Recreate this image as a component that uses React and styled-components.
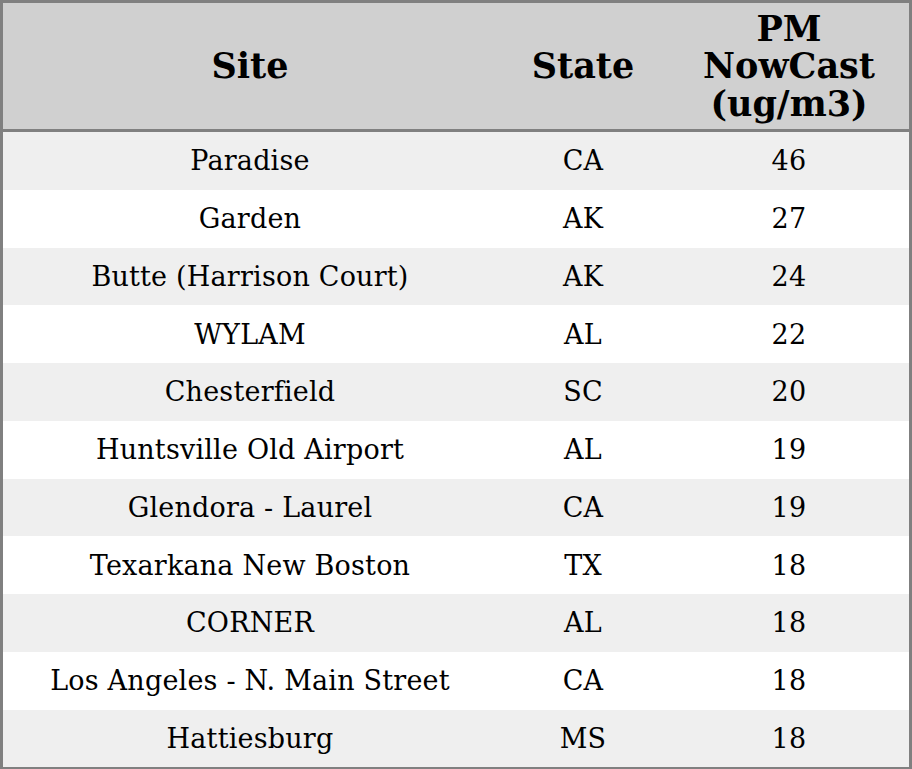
import React from 'react';
import styled, { createGlobalStyle } from 'styled-components';

const GlobalStyle = createGlobalStyle`
  html, body {
    margin: 0;
    padding: 0;
    background: #ffffff;
  }
`;

const Table = styled.table`
  width: 912px;
  border-collapse: collapse;
  border: 3px solid #808080;
  font-family: "DejaVu Serif", serif;
  color: #000000;
  table-layout: fixed;
`;

const HeadRow = styled.tr`
  background: #d0d0d0;
  border-bottom: 3px solid #808080;
`;

const HeadCell = styled.th`
  width: ${props => props.$width}px;
  height: 126px;
  padding: 0;
  font-size: 35px;
  font-weight: bold;
  line-height: 37.5px;
  text-align: center;
  vertical-align: middle;
`;

const Row = styled.tr`
  background: ${props => (props.$odd ? '#efefef' : '#ffffff')};
`;

const Cell = styled.td`
  height: 57.75px;
  padding: 0;
  font-size: 27px;
  letter-spacing: 0.2px;
  text-align: center;
  vertical-align: middle;
`;

const sites = [
  { site: 'Paradise', state: 'CA', value: 46 },
  { site: 'Garden', state: 'AK', value: 27 },
  { site: 'Butte (Harrison Court)', state: 'AK', value: 24 },
  { site: 'WYLAM', state: 'AL', value: 22 },
  { site: 'Chesterfield', state: 'SC', value: 20 },
  { site: 'Huntsville Old Airport', state: 'AL', value: 19 },
  { site: 'Glendora - Laurel', state: 'CA', value: 19 },
  { site: 'Texarkana New Boston', state: 'TX', value: 18 },
  { site: 'CORNER', state: 'AL', value: 18 },
  { site: 'Los Angeles - N. Main Street', state: 'CA', value: 18 },
  { site: 'Hattiesburg', state: 'MS', value: 18 },
];

const App = () => (
  <>
    <GlobalStyle />
    <Table>
      <thead>
        <HeadRow>
          <HeadCell $width={494}>Site</HeadCell>
          <HeadCell $width={172}>State</HeadCell>
          <HeadCell $width={240}>PM<br />NowCast<br />(ug/m3)</HeadCell>
        </HeadRow>
      </thead>
      <tbody>
        {sites.map((s, i) => (
          <Row key={s.site} $odd={i % 2 === 0}>
            <Cell>{s.site}</Cell>
            <Cell>{s.state}</Cell>
            <Cell>{s.value}</Cell>
          </Row>
        ))}
      </tbody>
    </Table>
  </>
);

export default App;
